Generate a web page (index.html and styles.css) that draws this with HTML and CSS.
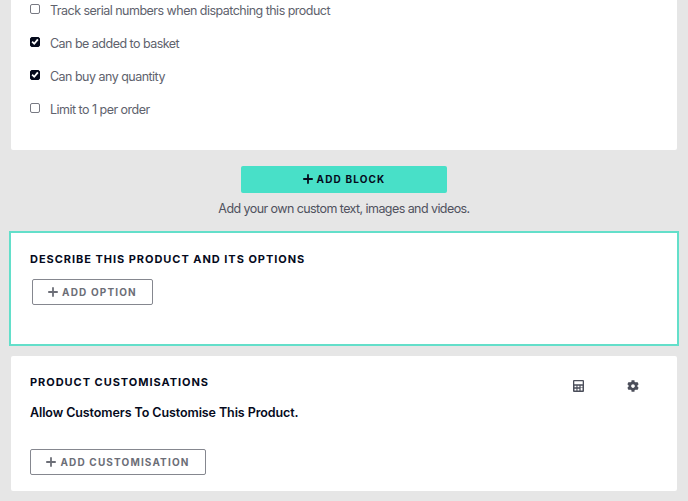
FILE: index.html
```html
<!DOCTYPE html>
<html lang="en">
<head>
    <meta charset="UTF-8">
    <meta name="viewport" content="width=device-width, initial-scale=1.0">
    <title>Edit Product</title>
    <link rel="stylesheet" href="styles.css">
</head>
<body>
<div class="panel settings">
    <label class="check-row"><input type="checkbox"><span>Track serial numbers when dispatching this product</span></label>
    <label class="check-row"><input type="checkbox" checked><span>Can be added to basket</span></label>
    <label class="check-row"><input type="checkbox" checked><span>Can buy any quantity</span></label>
    <label class="check-row"><input type="checkbox"><span>Limit to 1 per order</span></label>
</div>

<div class="add-block">
    <button class="btn btn-primary">
        <svg class="plus" viewBox="0 0 10 10"><path d="M5 .9v8.2M.9 5h8.2"/></svg>
        <span>ADD BLOCK</span>
    </button>
    <p>Add your own custom text, images and videos.</p>
</div>

<div class="panel options">
    <h2>DESCRIBE THIS PRODUCT AND ITS OPTIONS</h2>
    <button class="btn btn-outline">
        <svg class="plus" viewBox="0 0 10 10"><path d="M5 .9v8.2M.9 5h8.2"/></svg>
        <span>ADD OPTION</span>
    </button>
</div>

<div class="panel customisations">
    <div class="panel-header">
        <h2>PRODUCT CUSTOMISATIONS</h2>
        <div class="tools">
            <svg class="calculator" viewBox="0 0 11 12">
                <path fill-rule="evenodd" d="M1 0h9a1 1 0 0 1 1 1v10a1 1 0 0 1-1 1H1a1 1 0 0 1-1-1V1a1 1 0 0 1 1-1zM1.3 1.3v3h8.4v-3zM1.5 5.7v1.6h1.9V5.7zM4.5 5.7v1.6h1.9V5.7zM7.6 5.7v1.2h1.9V5.7zM1.5 8.7v1.7h1.9V8.7zM4.5 8.7v1.7h1.9V8.7zM7.6 7.6v2.8h1.9V7.6z"/>
            </svg>
            <svg class="cog" viewBox="0 0 512 512">
                <path d="M487.400 315.700l-42.600-24.600c4.300-23.200 4.300-47 0-70.200l42.600-24.600c4.900-2.800 7.100-8.600 5.500-14-11.100-35.600-30-67.800-54.700-94.600-3.800-4.100-10-5.100-14.800-2.300L380.800 110c-17.900-15.400-38.500-27.300-60.800-35.100V25.800c0-5.600-3.900-10.500-9.400-11.700-36.700-8.200-74.300-7.800-109.200 0-5.500 1.200-9.400 6.100-9.400 11.700V75c-22.200 7.900-42.800 19.800-60.800 35.100L88.700 85.500c-4.900-2.800-11-1.900-14.800 2.300-24.700 26.700-43.600 58.900-54.700 94.600-1.700 5.400.6 11.200 5.500 14L67.300 221c-4.300 23.200-4.300 47 0 70.200l-42.600 24.600c-4.900 2.800-7.100 8.600-5.500 14 11.100 35.600 30 67.800 54.700 94.600 3.800 4.100 10 5.100 14.800 2.300l42.600-24.600c17.900 15.400 38.500 27.300 60.800 35.100v49.200c0 5.600 3.900 10.500 9.400 11.700 36.700 8.200 74.300 7.800 109.200 0 5.500-1.200 9.400-6.100 9.400-11.700v-49.200c22.200-7.900 42.800-19.800 60.800-35.100l42.600 24.600c4.900 2.800 11 1.900 14.800-2.300 24.700-26.700 43.600-58.900 54.700-94.600 1.500-5.500-.7-11.300-5.600-14.100zM256 336c-44.100 0-80-35.900-80-80s35.900-80 80-80 80 35.900 80 80-35.900 80-80 80z"/>
            </svg>
        </div>
    </div>
    <h3>Allow Customers To Customise This Product.</h3>
    <button class="btn btn-outline">
        <svg class="plus" viewBox="0 0 10 10"><path d="M5 .9v8.2M.9 5h8.2"/></svg>
        <span>ADD CUSTOMISATION</span>
    </button>
</div>
</body>
</html>
```

FILE: styles.css
```css
* {
    box-sizing: border-box;
}

body {
    margin: 0;
    padding: 0 11px 10px;
    height: 501px;
    overflow: hidden;
    background: #e6e6e6;
    color: #60626d;
    font-family: Inter, "Liberation Sans", sans-serif;
    font-size: 12.5px;
    letter-spacing: -0.52px;
}

h2, h3, p {
    margin: 0;
}

.panel {
    background: #fff;
    border-radius: 2px;
}

/* Checkbox list */
.settings {
    height: 150px;
    padding: 0 19px;
    border-radius: 0 0 2px 2px;
}

.check-row {
    display: flex;
    align-items: center;
    gap: 10px;
    height: 33px;
}

.check-row:first-child {
    height: 26px;
    padding-bottom: 7px;
}

.check-row span {
    padding-top: 1px;
}

.check-row input {
    appearance: none;
    width: 10px;
    height: 10px;
    margin: 0 0 1px;
    border: 1px solid #777982;
    border-radius: 2px;
    background: #fff;
}

.check-row input:checked {
    border-color: #050a1c;
    background: #050a1c;
}

/* White tick */
.check-row input:checked::before {
    content: "";
    display: block;
    width: 8px;
    height: 8px;
    background: #fff;
    clip-path: polygon(6% 52%, 22% 37%, 39% 55%, 77% 10%, 95% 25%, 41% 87%);
}

/* Buttons */
.btn {
    display: flex;
    align-items: center;
    justify-content: center;
    gap: 4px;
    padding: 0;
    border: 0;
    border-radius: 2px;
    font-family: inherit;
    font-size: 10px;
    font-weight: 700;
    letter-spacing: 1.15px;
    white-space: nowrap;
}

.btn-primary {
    width: 206px;
    height: 27px;
    padding-bottom: 1px;
    background: #48e0c8;
    color: #050a1c;
}

.btn-outline {
    height: 26px;
    border: 1px solid #85878f;
    background: #fff;
    color: #6c6e77;
}

.plus {
    width: 10px;
    height: 10px;
    fill: none;
    stroke: currentColor;
    stroke-width: 1.8;
    stroke-linecap: round;
}

.add-block {
    display: flex;
    flex-direction: column;
    align-items: center;
    height: 81px;
    padding: 16px 0 0;
    color: #50525e;
}

.add-block p {
    margin-top: 8px;
    line-height: 16px;
    letter-spacing: -0.57px;
}

/* Panels */
h2 {
    color: #050a1c;
    font-size: 11px;
    font-weight: 700;
    letter-spacing: 0.96px;
    line-height: 14px;
}

h3 {
    color: #050a1c;
    font-size: 12.5px;
    font-weight: 600;
    letter-spacing: -0.09px;
    line-height: 16px;
}

.options {
    height: 115px;
    margin: 0 -2px;
    padding: 19px 19px 0;
    border: 2px solid #63dfca;
    border-radius: 0;
}

.options .btn {
    width: 121px;
    margin: 13px 0 0 2px;
}

.customisations {
    height: 135px;
    margin-top: 10px;
    padding: 19px 19px 0;
}

.customisations .btn {
    width: 176px;
    margin-top: 28px;
}

.panel-header {
    display: flex;
    justify-content: space-between;
    height: 30px;
}

.tools {
    display: flex;
    gap: 43px;
    padding: 5px 19px 0 0;
}

.tools svg {
    width: 12px;
    height: 12px;
    fill: #4b4e5a;
}

.tools .calculator {
    width: 11px;
}
```
